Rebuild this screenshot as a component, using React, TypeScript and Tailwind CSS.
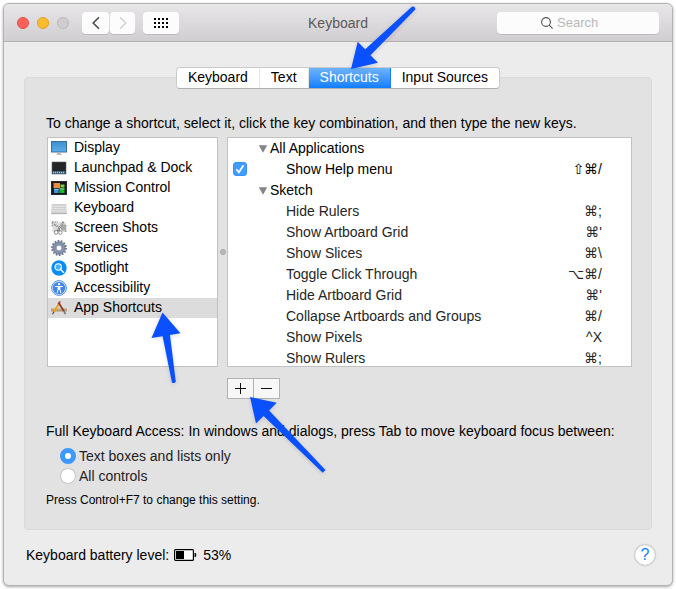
import React, { useState } from 'react';

type ShortcutRow = {
    name: string;
    keys: string;
    checkable?: boolean;
};

type ShortcutGroup = {
    title: string;
    rows: ShortcutRow[];
};

const GROUPS: ShortcutGroup[] = [
    {
        title: 'All Applications',
        rows: [{ name: 'Show Help menu', keys: '⇧⌘/', checkable: true }]
    },
    {
        title: 'Sketch',
        rows: [
            { name: 'Hide Rulers', keys: '⌘;' },
            { name: 'Show Artboard Grid', keys: "⌘'" },
            { name: 'Show Slices', keys: '⌘\\' },
            { name: 'Toggle Click Through', keys: '⌥⌘/' },
            { name: 'Hide Artboard Grid', keys: "⌘'" },
            { name: 'Collapse Artboards and Groups', keys: '⌘/' },
            { name: 'Show Pixels', keys: '^X' },
            { name: 'Show Rulers', keys: '⌘;' }
        ]
    }
];

const TABS = ['Keyboard', 'Text', 'Shortcuts', 'Input Sources'];

const DisplayIcon = () => (
    <svg width="16" height="16" viewBox="0 0 16 16" className="shrink-0">
        <defs>
            <linearGradient id="screen" x1="0" y1="0" x2="0" y2="1">
                <stop offset="0" stopColor="#3f8fce" />
                <stop offset="1" stopColor="#5aaeea" />
            </linearGradient>
        </defs>
        <rect x="0.5" y="1.5" width="15" height="10.5" fill="url(#screen)" stroke="#3a6d99" />
        <path d="M6 12.5h4v1.3l1 .9H5l1-.9z" fill="#b5b5b5" />
    </svg>
);

const LaunchpadIcon = () => (
    <svg width="16" height="16" viewBox="0 0 16 16" className="shrink-0">
        <rect x="1" y="2" width="14" height="12" fill="#222629" stroke="#5d6166" strokeWidth="0.6" />
        <rect x="1" y="11" width="14" height="3" fill="#34536b" />
        <path d="M2 12.5h12" stroke="#a9d0e8" strokeWidth="1.3" strokeDasharray="1.2 0.8" />
    </svg>
);

const MissionIcon = () => (
    <svg width="16" height="16" viewBox="0 0 16 16" className="shrink-0">
        <rect x="0.5" y="1.5" width="15" height="13" fill="#15181c" stroke="#2a2d30" />
        <rect x="2.5" y="3" width="6.5" height="5" fill="#f08a3c" />
        <rect x="9.5" y="4.5" width="4" height="3" fill="#7ecb43" />
        <rect x="3" y="8.8" width="4.7" height="4.2" fill="#3d8fd8" />
        <rect x="8.5" y="8.3" width="5" height="4.7" fill="#20b52c" />
        <path d="M3 9.3h4.7M8.5 8.8h5" stroke="#fff" strokeOpacity="0.5" />
    </svg>
);

const KeyboardIcon = () => (
    <svg width="16" height="16" viewBox="0 0 16 16" className="shrink-0">
        <path d="M0.8 4h14.4l.6 9H.2z" fill="#cfcfcf" />
        <path d="M.2 13h15.6v1.2H.2z" fill="#b5b5b5" />
        <path d="M1.5 6.3h13M1.5 8.5h13M1.2 10.8h13.6" stroke="#ececec" strokeWidth="1.2" strokeDasharray="1.4 0.6" />
    </svg>
);

const ScreenShotsIcon = () => (
    <svg width="16" height="16" viewBox="0 0 16 16" className="shrink-0">
        <rect x="1.5" y="2.5" width="13.5" height="9.5" fill="#dcdcdc" />
        <path d="M1 2h6M1.2 2v5M14.8 5v7" stroke="#777" strokeDasharray="1.8 0.8" fill="none" />
        <path d="M10 4.5h4.5v6H10z" fill="#a9a9a9" />
        <path d="M3 4.2l5.6 3.2M12.5 1.8L6.4 11" stroke="#6a6a6a" strokeWidth="1.6" />
        <path d="M3.5 4.4l5 2.8M12 2.6L7.2 9.8" stroke="#fff" strokeWidth="0.7" />
        <path d="M8 7.5l.8 4" stroke="#888" strokeWidth="1.2" />
        <circle cx="5.2" cy="12.4" r="1.9" fill="#fff" stroke="#777" strokeWidth="0.9" />
        <circle cx="9.4" cy="12.6" r="1.7" fill="#fff" stroke="#888" strokeWidth="0.9" />
    </svg>
);

const ServicesIcon = () => (
    <svg width="16" height="16" viewBox="0 0 16 16" className="shrink-0">
        <circle cx="8" cy="8" r="7" fill="none" stroke="#66728a" strokeWidth="1.8" strokeDasharray="1.7 1.44" />
        <circle cx="8" cy="8" r="4.6" fill="none" stroke="#8492ab" strokeWidth="3.4" />
        <circle cx="8" cy="8" r="6.2" fill="none" stroke="#5f6b82" strokeWidth="0.6" />
        <circle cx="8" cy="8" r="2.8" fill="#fff" stroke="#66728a" strokeWidth="0.7" />
    </svg>
);

const SpotlightIcon = () => (
    <svg width="16" height="16" viewBox="0 0 16 16" className="shrink-0">
        <circle cx="8" cy="8" r="7.7" fill="#098df5" />
        <circle cx="7.2" cy="7" r="3.2" fill="#4bb0fb" stroke="#fff" strokeWidth="1.1" />
        <path d="M9.6 9.4l2.8 2.9" stroke="#fff" strokeWidth="1.5" strokeLinecap="round" />
    </svg>
);

const AccessibilityIcon = () => (
    <svg width="16" height="16" viewBox="0 0 16 16" className="shrink-0">
        <circle cx="8" cy="8" r="7.4" fill="#fff" stroke="#3a7fdf" strokeWidth="0.9" />
        <circle cx="8" cy="8" r="6.3" fill="#4587e6" />
        <circle cx="8" cy="4.1" r="1.2" fill="#fff" />
        <path d="M4 6.5h8M7.2 6.8v2.4l-1.2 4M8.8 6.8v2.4l1.2 4" stroke="#fff" strokeWidth="1" fill="none" />
        <path d="M7 6.4h2v3.3H7z" fill="#fff" />
    </svg>
);

const AppShortcutsIcon = () => (
    <svg width="16" height="16" viewBox="0 0 16 16" className="shrink-0">
        <path d="M0 8.4h16v2.8H0z" fill="#c6a67b" />
        <path d="M0 11h16" stroke="#a38560" strokeWidth="0.6" />
        <path d="M8.6 2.8L2.8 12" stroke="#e9a11f" strokeWidth="2" />
        <path d="M2.9 11.8l-1.4 2.4" stroke="#5b4636" strokeWidth="1.2" />
        <path d="M7.8 1.6l1.8 1" stroke="#d86a5c" strokeWidth="1.8" />
        <path d="M7.4 2.4l5.4 8.6" stroke="#8b3a2c" strokeWidth="1.8" />
        <path d="M12.5 10.5l2 3.6" stroke="#77797c" strokeWidth="1.6" />
    </svg>
);

const CATEGORIES = [
    { name: 'Display', Icon: DisplayIcon },
    { name: 'Launchpad & Dock', Icon: LaunchpadIcon },
    { name: 'Mission Control', Icon: MissionIcon },
    { name: 'Keyboard', Icon: KeyboardIcon },
    { name: 'Screen Shots', Icon: ScreenShotsIcon },
    { name: 'Services', Icon: ServicesIcon },
    { name: 'Spotlight', Icon: SpotlightIcon },
    { name: 'Accessibility', Icon: AccessibilityIcon },
    { name: 'App Shortcuts', Icon: AppShortcutsIcon }
];

// Callout arrows, each anchored to the control it points at
const TabArrow = () => (
    <svg width="66" height="64" viewBox="0 0 66 64" className="pointer-events-none absolute bottom-[18px] left-[41px] z-20 drop-shadow-sm">
        <path d="M1 63L7.7 35.7l7.5 7.5L62.1.5q3.3-.4 3.2 3L20.5 49.2l7.5 7.5z" fill="#0a50ff" />
    </svg>
);

const ListArrow = () => (
    <svg width="32" height="72" viewBox="0 0 32 72" className="pointer-events-none absolute left-[102px] top-[14px] z-20 drop-shadow-sm">
        <path d="M12.5.5L30.5 21.2l-10.5 1.7L25.8 70q-1.6 1.4-3.8.7L12.6 24.2 1.5 26z" fill="#0a50ff" />
    </svg>
);

const AddArrow = () => (
    <svg width="77" height="77" viewBox="0 0 77 77" className="pointer-events-none absolute left-[22px] top-[18px] z-20 drop-shadow-sm">
        <path d="M1 1l26.7 5.7-7.6 7.8L76.5 74.1l-2.8 2.6L14.6 20.1 7 27.5z" fill="#0a50ff" />
    </svg>
);

export default function App() {
    const [tab, setTab] = useState('Shortcuts');
    const [category, setCategory] = useState('App Shortcuts');
    const [helpMenu, setHelpMenu] = useState(true);
    const [focusMode, setFocusMode] = useState<'text' | 'all'>('text');
    const [closed, setClosed] = useState<string[]>([]);

    const toggleGroup = (title: string) => {
        setClosed((prev) => (prev.includes(title) ? prev.filter((t) => t !== title) : [...prev, title]));
    };

    return (
        <div className="bg-white p-[3px] font-['Liberation_Sans','DejaVu_Sans',sans-serif] text-sm text-black">
            <div className="rounded-md border border-[#b4b4b4] bg-[#ececec] shadow-[0_1px_3px_rgba(0,0,0,0.35)]">
                <header className="grid grid-cols-[1fr_auto_1fr] items-center rounded-t-md border-b border-[#b3b1b3] bg-gradient-to-b from-[#e8e6e8] to-[#d0ced0] pb-[7px] pl-[13px] pr-[13px] pt-2">
                    <div className="flex items-center">
                        <div className="flex gap-2">
                            <button type="button" aria-label="Close" className="size-3 rounded-full border border-[#e2514a] bg-[#fc605b]" />
                            <button type="button" aria-label="Minimize" className="size-3 rounded-full border border-[#dfa023] bg-[#fdbc2e]" />
                            <button type="button" aria-label="Zoom" className="size-3 rounded-full border border-[#bab8ba] bg-[#cfcdcf]" />
                        </div>
                        <div className="ml-[13px] flex gap-px">
                            <button type="button" aria-label="Back" className="flex h-[22px] w-[27px] items-center justify-center rounded-[4px] bg-[#fcfcfc] shadow-[0_1px_0_#bdbbbd]">
                                <svg width="8" height="14" viewBox="0 0 8 14" fill="none" stroke="#4c4c4c" strokeWidth="1.6">
                                    <path d="M7 1.2L1.2 7 7 12.8" />
                                </svg>
                            </button>
                            <button type="button" aria-label="Forward" className="flex h-[22px] w-[25px] items-center justify-center rounded-[4px] bg-[#fcfcfc] shadow-[0_1px_0_#bdbbbd]">
                                <svg width="8" height="14" viewBox="0 0 8 14" fill="none" stroke="#d0d0d0" strokeWidth="1.4">
                                    <path d="M1 1.2L6.8 7 1 12.8" />
                                </svg>
                            </button>
                        </div>
                        <button type="button" aria-label="Show All" className="ml-2 flex h-[22px] w-9 items-center justify-center rounded-[4px] bg-[#fcfcfc] shadow-[0_1px_0_#bdbbbd]">
                            <svg width="14" height="10" viewBox="0 0 14 10" fill="none" stroke="#000" strokeWidth="2" strokeDasharray="2 2">
                                <path d="M0 1h14M0 5h14M0 9h14" />
                            </svg>
                        </button>
                    </div>
                    <h1 className="text-sm text-[#5a5a5a]">Keyboard</h1>
                    <label className="flex h-[22px] w-[162px] items-center justify-self-end rounded-[4px] bg-[#fcfcfc] pl-11 shadow-[0_1px_0_#bdbbbd]">
                        <svg width="12" height="12" viewBox="0 0 12 12" fill="none" stroke="#555" strokeWidth="1.1" className="shrink-0">
                            <circle cx="5" cy="5" r="4.4" />
                            <path d="M8.2 8.2l3.4 3.4" />
                        </svg>
                        <input aria-label="Search" placeholder="Search" className="ml-1 w-full min-w-0 bg-transparent text-[13px] outline-none placeholder:text-[#b9b9b9]" />
                    </label>
                </header>

                <main className="px-5 pt-[25px]">
                    <div className="relative z-10 -mb-3 flex justify-center">
                        <div className="flex rounded-[4px] border border-[#cacaca] border-b-[#b0b0b0] bg-white">
                            {TABS.map((name) => (
                                <button
                                    key={name}
                                    type="button"
                                    onClick={() => setTab(name)}
                                    className={`relative h-5 border-r px-[11px] pb-[2px] leading-[18px] last:border-r-0 ${tab === name
                                        ? 'border-[#1a7fff] bg-gradient-to-b from-[#6cb3fa] to-[#087eff] text-white'
                                        : 'border-[#e6e6e6]'
                                        }`}
                                >
                                    {name}
                                    {name === 'Shortcuts' && <TabArrow />}
                                </button>
                            ))}
                        </div>
                    </div>

                    <section className="rounded-[4px] border border-[#dadada] bg-[#e2e2e2] pb-[19px] pl-[21px] pr-[19px] pt-[35px]">
                        <p className="leading-5">To change a shortcut, select it, click the key combination, and then type the new keys.</p>

                        <div className="ml-px mt-1 flex h-[230px]">
                            <ul className="w-[171px] shrink-0 border border-[#c2c2c2] bg-white">
                                {CATEGORIES.map(({ name, Icon }) => (
                                    <li key={name} className="relative">
                                        <button
                                            type="button"
                                            onClick={() => setCategory(name)}
                                            className={`flex h-5 w-full items-center gap-[7px] pl-[3px] text-left ${category === name ? 'bg-[#dcdcdc]' : ''}`}
                                        >
                                            <Icon />
                                            <span className="self-start leading-[18px]">{name}</span>
                                        </button>
                                        {name === 'App Shortcuts' && <ListArrow />}
                                    </li>
                                ))}
                            </ul>
                            <div className="flex w-[9px] shrink-0 items-center justify-center">
                                <span className="size-[6px] rounded-full border border-[#a8a8a8] bg-[#b8b8b8]" />
                            </div>
                            <div className="min-w-0 flex-1 overflow-hidden border border-[#c2c2c2] bg-white">
                                <table className="w-full">
                                    <tbody>
                                        {GROUPS.map((group) => (
                                            <React.Fragment key={group.title}>
                                                <tr className="h-[21px] align-top">
                                                    <td className="w-[30px] p-0" />
                                                    <td colSpan={2} className="p-0">
                                                        <button type="button" onClick={() => toggleGroup(group.title)} className="flex items-center gap-[2px] leading-[21px]">
                                                            <svg width="10" height="8" viewBox="0 0 10 8" className={closed.includes(group.title) ? '-rotate-90' : ''}>
                                                                <path d="M.8.3h8.4L5 7.8z" fill="#858585" />
                                                            </svg>
                                                            {group.title}
                                                        </button>
                                                    </td>
                                                </tr>
                                                {!closed.includes(group.title) && group.rows.map((row) => (
                                                    <tr key={row.name} className={`h-[21px] align-top ${row.checkable ? '' : 'text-[#262626]'}`}>
                                                        <td className="w-[30px] p-0 pl-[5px]">
                                                            {row.checkable && (
                                                                <label className="relative mt-[3px] block size-[14px]">
                                                                    <input
                                                                        type="checkbox"
                                                                        aria-label={row.name}
                                                                        checked={helpMenu}
                                                                        onChange={(e) => setHelpMenu(e.target.checked)}
                                                                        className="block size-[14px] appearance-none rounded-[3px] border border-[#bbb] bg-white checked:border-[#3693fb] checked:bg-[#419cff]"
                                                                    />
                                                                    {helpMenu && (
                                                                        <svg width="14" height="14" viewBox="0 0 14 14" fill="none" stroke="#fff" strokeWidth="1.7" className="pointer-events-none absolute inset-0">
                                                                            <path d="M3.4 7.4l2.5 2.9 4.6-7" />
                                                                        </svg>
                                                                    )}
                                                                </label>
                                                            )}
                                                        </td>
                                                        <td className="p-0 pl-7 leading-[21px]">{row.name}</td>
                                                        <td className="p-0 pr-[29px] text-right leading-[21px]">{row.keys}</td>
                                                    </tr>
                                                ))}
                                            </React.Fragment>
                                        ))}
                                    </tbody>
                                </table>
                            </div>
                        </div>

                        <div className="ml-[181px] mt-[11px] flex">
                            <div className="relative">
                                <button type="button" aria-label="Add shortcut" className="flex h-[21px] w-[27px] items-center justify-center border border-[#b2b2b2] bg-[#f7f7f7]">
                                    <svg width="11" height="11" viewBox="0 0 11 11" stroke="#111" strokeWidth="1">
                                        <path d="M0 5.5h11M5.5 0v11" />
                                    </svg>
                                </button>
                                <AddArrow />
                            </div>
                            <button type="button" aria-label="Remove shortcut" className="-ml-px flex h-[21px] w-[27px] items-center justify-center border border-[#b2b2b2] bg-[#f7f7f7]">
                                <svg width="11" height="11" viewBox="0 0 11 11" stroke="#111" strokeWidth="1">
                                    <path d="M0 5.5h11" />
                                </svg>
                            </button>
                        </div>

                        <fieldset className="mt-[22px]">
                            <legend className="leading-5">Full Keyboard Access: In windows and dialogs, press Tab to move keyboard focus between:</legend>
                            <div className="mt-[5px] pl-[14px] text-[#222]">
                                <label className="flex h-5 items-center gap-[3px]">
                                    <input
                                        type="radio"
                                        name="focus"
                                        checked={focusMode === 'text'}
                                        onChange={() => setFocusMode('text')}
                                        className="size-4 appearance-none rounded-full border border-[#c4c4c4] bg-white checked:border-5 checked:border-[#3d99ff]"
                                    />
                                    Text boxes and lists only
                                </label>
                                <label className="flex h-5 items-center gap-[3px]">
                                    <input
                                        type="radio"
                                        name="focus"
                                        checked={focusMode === 'all'}
                                        onChange={() => setFocusMode('all')}
                                        className="size-4 appearance-none rounded-full border border-[#c4c4c4] bg-white checked:border-5 checked:border-[#3d99ff]"
                                    />
                                    All controls
                                </label>
                            </div>
                            <p className="mt-1 text-xs leading-5">Press Control+F7 to change this setting.</p>
                        </fieldset>
                    </section>
                </main>

                <footer className="flex items-center justify-between pb-5 pl-[22px] pr-[17px] pt-[15px]">
                    <div className="flex items-center">
                        <span>Keyboard battery level:</span>
                        <svg width="23" height="12" viewBox="0 0 23 12" className="ml-[5px]">
                            <rect x="0.6" y="0.6" width="18.8" height="10.8" rx="1" fill="#fff" stroke="#000" strokeWidth="1.2" />
                            <path d="M2 2h8v8H2z" fill="#000" />
                            <path d="M21 4q2 2 0 4z" fill="#000" stroke="#000" strokeWidth="0.8" />
                        </svg>
                        <span className="ml-[6px]">53%</span>
                    </div>
                    <button type="button" aria-label="Help" className="flex size-5 items-center justify-center rounded-full bg-white text-base text-[#1480ff] shadow-[0_0_2px_rgba(0,0,0,0.5)]">
                        ?
                    </button>
                </footer>
            </div>
        </div>
    );
}
